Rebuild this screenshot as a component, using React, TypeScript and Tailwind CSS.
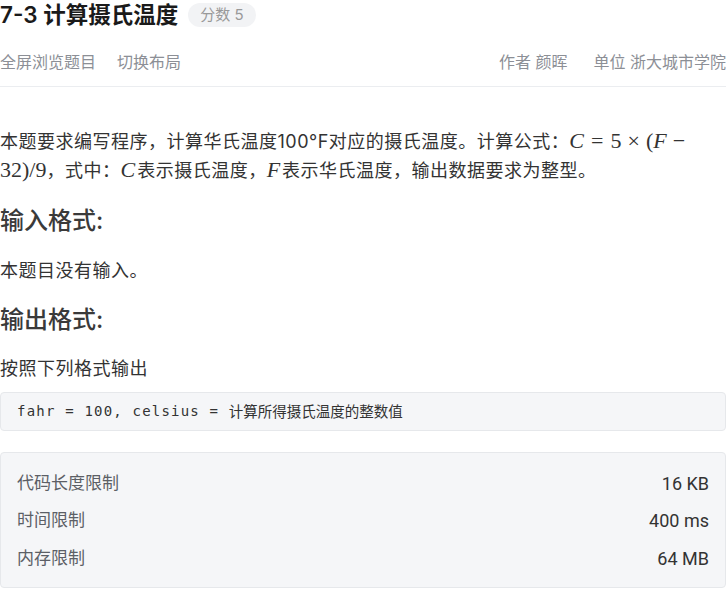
const sans = "font-['Inter','Noto_Sans_CJK_SC',sans-serif]";

function Limit({ label, value }: { label: string; value: string }) {
  return (
    <div className="flex items-center justify-between h-[37.5px]">
      <span className="text-[17px] text-[#5c5f66]">{label}</span>
      <span className="text-[18px] text-[#333] font-['Roboto','Noto_Sans_CJK_SC',sans-serif]">{value}</span>
    </div>
  );
}

export default function App() {
  const m = "font-['Liberation_Serif',serif] text-[22px] leading-none tracking-normal";
  return (
    <div className={`${sans} w-[726px] h-[594px] bg-white overflow-hidden text-[#333]`}>
      {/* Header */}
      <div className="flex items-center gap-[10px] h-[30px]">
        <h1 className="text-[22.5px] font-semibold text-[#1a1a1a] leading-[30px]">7-3 计算摄氏温度</h1>
        <span className="h-[24px] px-[12px] rounded-full bg-[#f2f3f5] text-[#999] text-[15px] leading-[24px]">分数 5</span>
      </div>
      <div className="flex items-center justify-between mt-[18px] h-[28px] text-[16px] text-[#8c8f96]">
        <div className="flex gap-[21px]">
          <span>全屏浏览题目</span>
          <span>切换布局</span>
        </div>
        <div className="flex gap-[26px]">
          <span>作者 颜晖</span>
          <span>单位 浙大城市学院</span>
        </div>
      </div>
      <div className="mt-[10px] border-b border-[#ebedf0]" />

      {/* Body */}
      <div className="pt-[40px]">
        <p className="text-[18px] leading-[29px] tracking-[0.5px]">
          本题要求编写程序，计算华氏温度100°F对应的摄氏温度。计算公式：
          <span className={`${m} whitespace-nowrap`}>
            <i>C</i>
            <span className="mx-[7px]">=</span>5<span className="mx-[6px]">×</span>(<i>F</i>
            <span className="ml-[6px]">−</span>
          </span>
          <br />
          <span className={`${m} tracking-[1.5px]`}>32)/9</span>，式中：
          <i className={`${m} pr-[2px]`}>C</i>表示摄氏温度，
          <i className={`${m} pr-[2px]`}>F</i>表示华氏温度，输出数据要求为整型。
        </p>

        <h2 className="mt-[19.5px] text-[24px] leading-[32px] font-medium text-[#3a3a3a]">输入格式:</h2>
        <p className="mt-[19.5px] text-[18px] leading-[29px] tracking-[0.5px]">本题目没有输入。</p>

        <h2 className="mt-[18.5px] text-[24px] leading-[32px] font-medium text-[#3a3a3a]">输出格式:</h2>
        <p className="mt-[18.5px] text-[18px] leading-[29px] tracking-[0.5px]">按照下列格式输出</p>

        <div className="mt-[8.5px] h-[39px] flex items-center px-[16px] bg-[#f5f6f8] border border-[#e6e8eb] rounded-[4px] text-[14px] text-[#333]">
          <span className="font-['DejaVu_Sans_Mono',monospace] tracking-[1.2px] whitespace-pre">fahr = 100, celsius = </span>
          <span className="font-['Noto_Sans_CJK_SC',sans-serif] text-[14.5px]">计算所得摄氏温度的整数值</span>
        </div>

        <div className="mt-[21px] h-[136px] px-[16px] pt-[12px] bg-[#f5f6f8] border border-[#e6e8eb] rounded-[4px]">
          <Limit label="代码长度限制" value="16 KB" />
          <Limit label="时间限制" value="400 ms" />
          <Limit label="内存限制" value="64 MB" />
        </div>
      </div>
    </div>
  );
}
